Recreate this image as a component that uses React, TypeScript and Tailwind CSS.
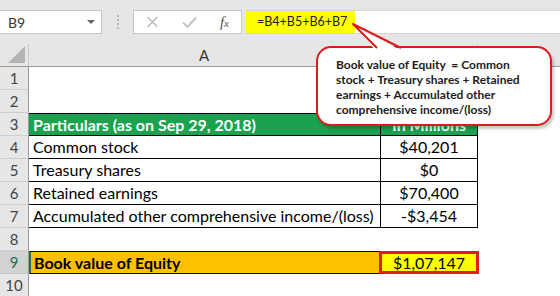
import React from 'react';

type RowKind = 'blank' | 'head' | 'data' | 'total';

interface SheetRow {
  n: number;
  kind: RowKind;
  a?: string;
  b?: string;
}

const rows: SheetRow[] = [
  { n: 1, kind: 'blank' },
  { n: 2, kind: 'blank' },
  { n: 3, kind: 'head', a: 'Particulars (as on Sep 29, 2018)', b: 'In Millions' },
  { n: 4, kind: 'data', a: 'Common stock', b: '$40,201' },
  { n: 5, kind: 'data', a: 'Treasury shares', b: '$0' },
  { n: 6, kind: 'data', a: 'Retained earnings', b: '$70,400' },
  { n: 7, kind: 'data', a: 'Accumulated other comprehensive income/(loss)', b: '-$3,454' },
  { n: 8, kind: 'blank' },
  { n: 9, kind: 'total', a: 'Book value of Equity', b: '$1,07,147' },
  { n: 10, kind: 'blank' },
];

function RowHeader({ n, active }: { n: number; active?: boolean }) {
  return (
    <div
      className={
        active
          ? 'w-[29px] shrink-0 h-full flex items-center justify-center bg-[#d2d2d2] text-[#217346] border-b border-r border-[#c8c8c8] border-r-[#9b9b9b] text-[15px]'
          : 'w-[29px] shrink-0 h-full flex items-center justify-center bg-[#e6e6e6] text-[#444] border-b border-r border-[#cdcdcd] border-r-[#9b9b9b] text-[15px]'
      }
    >
      {n}
    </div>
  );
}

function Row({ row }: { row: SheetRow }) {
  if (row.kind === 'blank') {
    return (
      <div className="flex h-[23px]">
        <RowHeader n={row.n} />
        <div className="flex-1 bg-white" />
      </div>
    );
  }

  if (row.kind === 'head') {
    return (
      <div className="flex h-[23px]">
        <RowHeader n={row.n} />
        <div className="w-[351px] shrink-0 bg-[#1aa24f] border-t border-b border-black text-white font-bold pl-[4px] flex items-center">
          {row.a}
        </div>
        <div className="w-[98px] shrink-0 bg-[#1aa24f] border-t border-b border-l border-r border-black text-white font-bold flex items-center justify-center">
          {row.b}
        </div>
        <div className="flex-1 bg-white" />
      </div>
    );
  }

  if (row.kind === 'data') {
    return (
      <div className="flex h-[23px]">
        <RowHeader n={row.n} />
        <div className="w-[351px] shrink-0 border-b border-black pl-[4px] flex items-center text-black">
          {row.a}
        </div>
        <div className="w-[98px] shrink-0 border-b border-l border-r border-black flex items-center justify-center text-black">
          {row.b}
        </div>
        <div className="flex-1 bg-white" />
      </div>
    );
  }

  return (
    <div className="flex h-[23px]">
      <RowHeader n={row.n} active />
      <div className="w-[351px] shrink-0 bg-[#ffc000] border-t border-b border-black border-l-2 border-l-[#217346] pl-[3px] flex items-center font-bold text-black">
        {row.a}
      </div>
      <div className="w-[100px] shrink-0 -ml-[1px] bg-[#ffff00] border-[3px] border-[#e31b1b] flex items-center justify-center text-black">
        {row.b}
      </div>
      <div className="flex-1 bg-white" />
    </div>
  );
}

function Toolbar() {
  return (
    <div className="h-[44px] bg-[#e6e6e6] flex items-center text-[14px]">
      <div className="w-[102px] h-[24px] bg-white border border-[#c6c6c6] border-l-0 flex items-center justify-between pl-[8px] pr-[6px] text-[#333]">
        <span>B9</span>
        <span className="w-0 h-0 border-l-[4px] border-r-[4px] border-t-[4px] border-l-transparent border-r-transparent border-t-[#666]" />
      </div>
      <div className="w-[31px] flex flex-col items-center gap-[2px]">
        <span className="w-[2px] h-[2px] bg-[#b8b8b8]" />
        <span className="w-[2px] h-[2px] bg-[#b8b8b8]" />
        <span className="w-[2px] h-[2px] bg-[#b8b8b8]" />
        <span className="w-[2px] h-[2px] bg-[#b8b8b8]" />
      </div>
      <div className="w-[109px] h-[24px] bg-white border border-[#c6c6c6] flex items-center justify-between pl-[12px] pr-[12px]">
        <svg width="13" height="12" viewBox="0 0 13 12">
          <path d="M1.5 1 L11.5 11 M11.5 1 L1.5 11" stroke="#bdbdbd" strokeWidth="1.6" />
        </svg>
        <svg width="15" height="12" viewBox="0 0 15 12">
          <path d="M1 6.5 L5.5 11 L14 1.5" stroke="#c4c4c4" strokeWidth="2" fill="none" />
        </svg>
        <span className="font-['Liberation_Serif'] italic text-[15px] text-[#555] leading-none">
          f<span className="text-[11px]">x</span>
        </span>
      </div>
      <div className="flex-1 h-[24px] ml-[4px] bg-white border-t border-b border-[#d4d4d4] flex">
        <div className="w-[109px] h-full bg-[#ffff00] flex items-center pl-[11px] text-[12.5px] text-[#222] whitespace-nowrap">
          =B4+B5+B6+B7
        </div>
      </div>
    </div>
  );
}

function ColumnHeader() {
  return (
    <div className="flex h-[23px] bg-[#e6e6e6] border-b border-[#9b9b9b]">
      <div className="w-[29px] shrink-0 h-full border-r border-[#c8c8c8] relative">
        <span className="absolute right-[3px] bottom-[3px] w-0 h-0 border-r-[17px] border-r-[#b4b4b4] border-t-[17px] border-t-transparent" />
      </div>
      <div className="w-[351px] shrink-0 h-full border-r border-[#c8c8c8] flex items-center justify-center text-[#333] text-[15px]">
        A
      </div>
      <div className="w-[98px] shrink-0 h-full border-r border-[#c8c8c8] flex items-center justify-center text-[#333] text-[15px]">
        B
      </div>
      <div className="flex-1" />
    </div>
  );
}

function Callout() {
  return (
    <>
      <div className="absolute left-[316px] top-[46px] w-[236px] h-[80px] rounded-[15px] border-2 border-[#e0191b] bg-white shadow-[2px_3px_3px_rgba(0,0,0,0.22)] pl-[18px] pt-[9px] text-[12px] leading-[15px] font-bold text-[#1c1c1c] whitespace-nowrap">
        <p>Book value of Equity&nbsp; = Common</p>
        <p>stock + Treasury shares + Retained</p>
        <p>earnings + Accumulated other</p>
        <p>comprehensive income/(loss)</p>
      </div>
      <svg className="absolute left-[345px] top-[18px]" width="64" height="34" viewBox="0 0 64 34">
        <path d="M31 33 L8 6 L57 33 Z" fill="#ffffff" />
        <path d="M32 30 L8 6 L56 30" fill="none" stroke="#e0191b" strokeWidth="2" strokeLinejoin="round" />
      </svg>
    </>
  );
}

export default function App() {
  return (
    <div className="w-[560px] h-[296px] overflow-hidden bg-white relative font-['Lato',_'Liberation_Sans',_sans-serif] text-[16px]">
      <Toolbar />
      <ColumnHeader />
      {rows.map((row) => (
        <Row key={row.n} row={row} />
      ))}
      <Callout />
    </div>
  );
}
